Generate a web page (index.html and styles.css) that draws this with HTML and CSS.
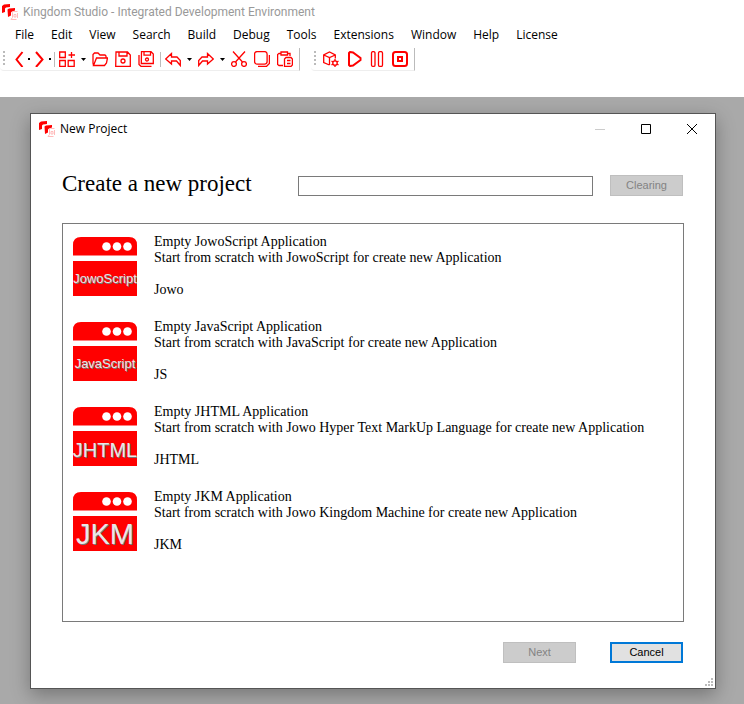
FILE: index.html
```html
<!DOCTYPE html>
<html lang="en">
<head>
<meta charset="utf-8">
<title>Kingdom Studio</title>
<link rel="stylesheet" href="styles.css">
</head>
<body>
<svg class="defs" aria-hidden="true">
  <symbol id="logo" viewBox="0 0 16 16">
    <path fill="#f00" d="M0 2 2 0.500 8 0v3l-4 .5-1 1V8L0 9zM5.500 5.500 7 4.500 13 4v2.500L10 7.500 9 8.500v3L6 13z"/>
    <path fill="none" stroke="#fbb" d="M15.500 7.500h-4l-1 1v5l-1.500 2h5.500M15.500 9v5M12 10.500h2v2.500h-2z"/>
  </symbol>
  <symbol id="drop" viewBox="0 0 5 3"><path d="M0 0h5L2.500 3z"/></symbol>
</svg>
<div class="app">
  <header class="titlebar">
    <svg class="logo"><use href="#logo"/></svg>
    <span>Kingdom Studio - Integrated Development Environment</span>
  </header>
  <nav class="menu" aria-label="Main menu">
    <button>File</button><button>Edit</button><button>View</button><button>Search</button><button>Build</button><button>Debug</button><button>Tools</button><button>Extensions</button><button>Window</button><button>Help</button><button>License</button>
  </nav>
  <div class="toolbars">
    <div class="toolbar">
      <span class="grip"></span>
      <button class="step" aria-label="Back"><svg viewBox="0 0 16 16"><path class="thick" d="M7.500 1 1.500 8.500l6 7.500"/><path class="dot" d="M13 7h2v2h-2z"/></svg></button>
      <button class="step" aria-label="Forward"><svg viewBox="0 0 16 16"><path class="thick" d="M1 1l6.500 7.500L1 16"/><path class="dot" d="M14 7h2v2h-2z"/></svg></button>
      <span class="sep"></span>
      <button class="tool" aria-label="New project"><svg viewBox="0 0 16 16"><path d="M.7 1h5.600v5.500H.7zM.7 9.500h5.600v6H.7zM9.200 9.500h6v6h-6zM12.500 1v6M9.500 4h6.500"/></svg></button>
      <button class="more" aria-label="New options"><svg><use href="#drop"/></svg></button>
      <button class="tool" aria-label="Open"><svg viewBox="0 0 16 16"><path d="M1.500 14.500 1 12V3.500L2.500 2H6l2 2h5l1 1v2M1.500 14.500 4.500 7h11l-1 5-2 2.500z"/></svg></button>
      <button class="tool" aria-label="Save"><svg viewBox="0 0 16 16"><path d="M1 1h11.500L15.300 4v11.300H.7zM4 1v4h8V1"/><circle cx="8" cy="10" r="2"/></svg></button>
      <button class="tool" aria-label="Save all"><svg viewBox="0 0 16 16"><path d="M3.500.7h9.500l2.300 2.300v9.500h-12zM6 .7v3.500h6.500V.7M1 4v9.500L3 15.300h10.500"/><circle cx="9" cy="8.500" r="1.500"/></svg></button>
      <span class="sep"></span>
      <button class="tool" aria-label="Undo"><svg viewBox="0 0 16 16"><path d="M6.500 2.500.7 8l5.800 5V10h5l3.800 4.500V9.500L12 6H6.500z"/></svg></button>
      <button class="more" aria-label="Undo history"><svg><use href="#drop"/></svg></button>
      <button class="tool" aria-label="Redo"><svg viewBox="0 0 16 16"><path d="M9.500 2.500 15.300 8l-5.800 5V10h-5L.7 14.500V9.500L4 6h5.500z"/></svg></button>
      <button class="more" aria-label="Redo history"><svg><use href="#drop"/></svg></button>
      <button class="tool" aria-label="Cut"><svg viewBox="0 0 16 16"><path d="M2 .5 11.500 11M14 .5 4.500 11"/><circle cx="3" cy="13" r="2.400"/><circle cx="13" cy="13" r="2.400"/></svg></button>
      <button class="tool" aria-label="Copy"><svg viewBox="0 0 16 16"><rect x=".6" y=".6" width="12.500" height="12.500" rx="2.500"/><path d="M15.400 4v8.500l-3 3H4"/></svg></button>
      <button class="tool" aria-label="Paste"><svg viewBox="0 0 16 16"><path d="M6 14.500H2l-1.400-1V3.500L2 2.500h1.500M10.500 2.500H13V5M4 1h6.500v3H4zM7.500 8 9 6.500h5l1.400 1.500v6L14 15.400H7.500zM10 9.500h3.500M10 12.500h3.500"/></svg></button>
    </div>
    <div class="toolbar">
      <span class="grip"></span>
      <button class="tool" aria-label="Build package"><svg viewBox="0 0 16 16"><path d="M6.500 14 .7 11.500V4L6.500 1l5.800 3v3.500M.7 4l5.800 2.500L12.300 4M6.500 6.500V14"/><circle cx="12" cy="12" r="2.200"/><path d="M12 8v2M12 14v2M8.500 10l1.500 1M14 13l1.500 1M8.500 14l1.500-1M14 11l1.500-1"/></svg></button>
      <button class="tool" aria-label="Run"><svg viewBox="0 0 16 16"><path class="thick" d="M3 2 4 1l3 .5L14.500 7v2L7 14.500l-3 .5-1-1z"/></svg></button>
      <button class="tool" aria-label="Pause"><svg viewBox="0 0 16 16"><rect x="2.500" y=".6" width="3.500" height="14.800" rx="1.500"/><rect x="9.500" y=".6" width="4" height="14.800" rx="1.500"/></svg></button>
      <button class="tool" aria-label="Stop"><svg viewBox="0 0 16 16"><rect class="thick" x="1" y="1" width="14" height="14" rx="2.500"/><rect class="thick" x="6" y="6" width="4" height="4"/></svg></button>
    </div>
  </div>
  <main class="workspace">
    <section class="dialog" role="dialog" aria-labelledby="dialog-title">
      <header class="caption">
        <svg class="logo"><use href="#logo"/></svg>
        <span id="dialog-title">New Project</span>
        <div class="controls">
          <button aria-label="Minimize" disabled><svg viewBox="0 0 10 10"><path d="M0 5.500h10"/></svg></button>
          <button aria-label="Maximize"><svg viewBox="0 0 10 10"><path d="M.5.5h9v9h-9z"/></svg></button>
          <button aria-label="Close"><svg viewBox="0 0 10 10"><path d="M0 0l10 10M10 0 0 10"/></svg></button>
        </div>
      </header>
      <div class="content">
        <div class="search">
          <h1><label for="query">Create a new project</label></h1>
          <input id="query" type="text">
          <button class="btn" disabled>Clearing</button>
        </div>
        <ul class="templates">
          <li>
            <svg class="thumb" viewBox="0 0 64 59"><path d="M0 18.500V8q0-8 8-8h48q8 0 8 8v10.500zM0 24h64v35H0z"/><g class="dots"><circle cx="33.500" cy="9.500" r="4.300"/><circle cx="44" cy="9.500" r="4.300"/><circle cx="54.500" cy="9.500" r="4.300"/></g><text class="word" x="32" y="46">JowoScript</text></svg>
            <div><h2>Empty JowoScript Application</h2><p>Start from scratch with JowoScript for create new Application</p><p class="tag">Jowo</p></div>
          </li>
          <li>
            <svg class="thumb" viewBox="0 0 64 59"><path d="M0 18.500V8q0-8 8-8h48q8 0 8 8v10.500zM0 24h64v35H0z"/><g class="dots"><circle cx="33.500" cy="9.500" r="4.300"/><circle cx="44" cy="9.500" r="4.300"/><circle cx="54.500" cy="9.500" r="4.300"/></g><text class="word" x="32" y="46">JavaScript</text></svg>
            <div><h2>Empty JavaScript Application</h2><p>Start from scratch with JavaScript for create new Application</p><p class="tag">JS</p></div>
          </li>
          <li>
            <svg class="thumb" viewBox="0 0 64 59"><path d="M0 18.500V8q0-8 8-8h48q8 0 8 8v10.500zM0 24h64v35H0z"/><g class="dots"><circle cx="33.500" cy="9.500" r="4.300"/><circle cx="44" cy="9.500" r="4.300"/><circle cx="54.500" cy="9.500" r="4.300"/></g><text class="word mid" x="32" y="50">JHTML</text></svg>
            <div><h2>Empty JHTML Application</h2><p>Start from scratch with Jowo Hyper Text MarkUp Language for create new Application</p><p class="tag">JHTML</p></div>
          </li>
          <li>
            <svg class="thumb" viewBox="0 0 64 59"><path d="M0 18.500V8q0-8 8-8h48q8 0 8 8v10.500zM0 24h64v35H0z"/><g class="dots"><circle cx="33.500" cy="9.500" r="4.300"/><circle cx="44" cy="9.500" r="4.300"/><circle cx="54.500" cy="9.500" r="4.300"/></g><text class="word big" x="32" y="52">JKM</text></svg>
            <div><h2>Empty JKM Application</h2><p>Start from scratch with Jowo Kingdom Machine for create new Application</p><p class="tag">JKM</p></div>
          </li>
        </ul>
        <footer class="actions">
          <button class="btn" disabled>Next</button>
          <button class="btn default">Cancel</button>
        </footer>
      </div>
      <svg class="resize" viewBox="0 0 8 8"><path d="M6 0h2v2H6zM3 3h2v2H3zM6 3h2v2H6zM0 6h2v2H0zM3 6h2v2H3zM6 6h2v2H6z"/></svg>
    </section>
  </main>
</div>
</body>
</html>
```
FILE: styles.css
```css
* { box-sizing: border-box; }
body { margin: 0; background: #fff; color: #000; font: 12px/16px "Open Sans", sans-serif; }
button { margin: 0; padding: 0; border: 0; background: none; color: inherit; font: inherit; }
svg { display: block; }
h1, h2, p, ul { margin: 0; padding: 0; font: inherit; }
.defs { position: absolute; width: 0; height: 0; }
.logo { width: 16px; height: 16px; flex: none; }

.app { display: flex; flex-direction: column; min-height: 100vh; }
.titlebar { display: flex; align-items: center; gap: 5px; height: 24px; padding-left: 2px; color: #999; font-family: Roboto, sans-serif; }
.menu { display: flex; gap: 17px; height: 22px; padding-left: 15px; }

.toolbars { display: flex; gap: 11px; height: 51px; padding-top: 2px; }
.toolbar { display: flex; align-items: stretch; height: 23px; padding-right: 3px; border-right: 1px solid #bbb; border-bottom: 1px solid #eee; border-radius: 4px 0 0 4px; }
.grip { width: 2px; height: 14px; margin: 3px 3px 0; background: repeating-linear-gradient(#bbb 0 2px, transparent 2px 4px); }
.sep { width: 4px; height: 15px; margin-top: 4px; border-right: 1px solid #bbb; }
.tool { width: 23px; padding-left: 4px; }
.step { width: 20px; padding-left: 4px; }
.grip + .step { margin-left: 3px; }
.tool svg, .step svg { width: 16px; height: 16px; fill: none; stroke: #f00; stroke-width: 1.3; }
.toolbar .thick { stroke-width: 2; }
.toolbar .dot { fill: #000; stroke: none; }
.more { width: 10px; padding-left: 3px; }
.more svg { width: 5px; height: 3px; }

.workspace { flex: 1; display: flex; padding: 16px 28px 15px 30px; background: #a9a9a9; }
.dialog { position: relative; flex: 1; display: flex; flex-direction: column; border: 1px solid #555; background: #fff; box-shadow: 0 6px 18px rgba(0, 0, 0, .3); }
.caption { display: flex; align-items: center; gap: 5px; height: 29px; padding-left: 8px; }
.controls { display: flex; margin-left: auto; }
.controls button { display: grid; place-items: center; width: 46px; height: 28px; }
.controls svg { width: 10px; height: 10px; fill: none; stroke: #000; }
.controls button:disabled svg { stroke: #ccc; }

.content { flex: 1; display: flex; flex-direction: column; padding: 32px 31px 25px; }
.search { display: grid; grid-template-columns: 219px 1fr 73px; gap: 17px; align-items: end; margin-right: 1px; }
.search h1 { align-self: start; font: 23px/17px "Liberation Serif", serif; white-space: nowrap; }
.search input { min-width: 0; width: 100%; height: 20px; padding: 1px 4px; border: 1px solid #7a7a7a; background: #fff; font: 12px "Liberation Sans", sans-serif; }
.btn { width: 73px; height: 21px; border: 1px solid #bfbfbf; background: #ccc; color: #838383; font: 11px/17px "Liberation Sans", sans-serif; }
.btn.default { border: 2px solid #0078d7; background: #e1e1e1; color: #000; }

.templates { flex: 1; margin-top: 27px; padding: 10px; border: 1px solid #7a7a7a; list-style: none; font: 14px/16px "Liberation Serif", serif; }
.templates li { display: flex; gap: 17px; height: 85px; }
.tag { margin-top: 16px; }
.thumb { width: 64px; height: 59px; margin-top: 3px; flex: none; fill: #f00; }
.dots { fill: #fff; }
.word { fill: #e8e8e8; font: 13px "Liberation Sans", sans-serif; text-anchor: middle; text-shadow: 1px 1px 0 #777; }
.word.mid { font-size: 20px; }
.word.big { font-size: 29px; }

.actions { display: flex; justify-content: flex-end; gap: 34px; margin: 20px 1px 0 0; }
.resize { position: absolute; right: 2px; bottom: 2px; width: 8px; height: 8px; fill: #bbb; }
```
